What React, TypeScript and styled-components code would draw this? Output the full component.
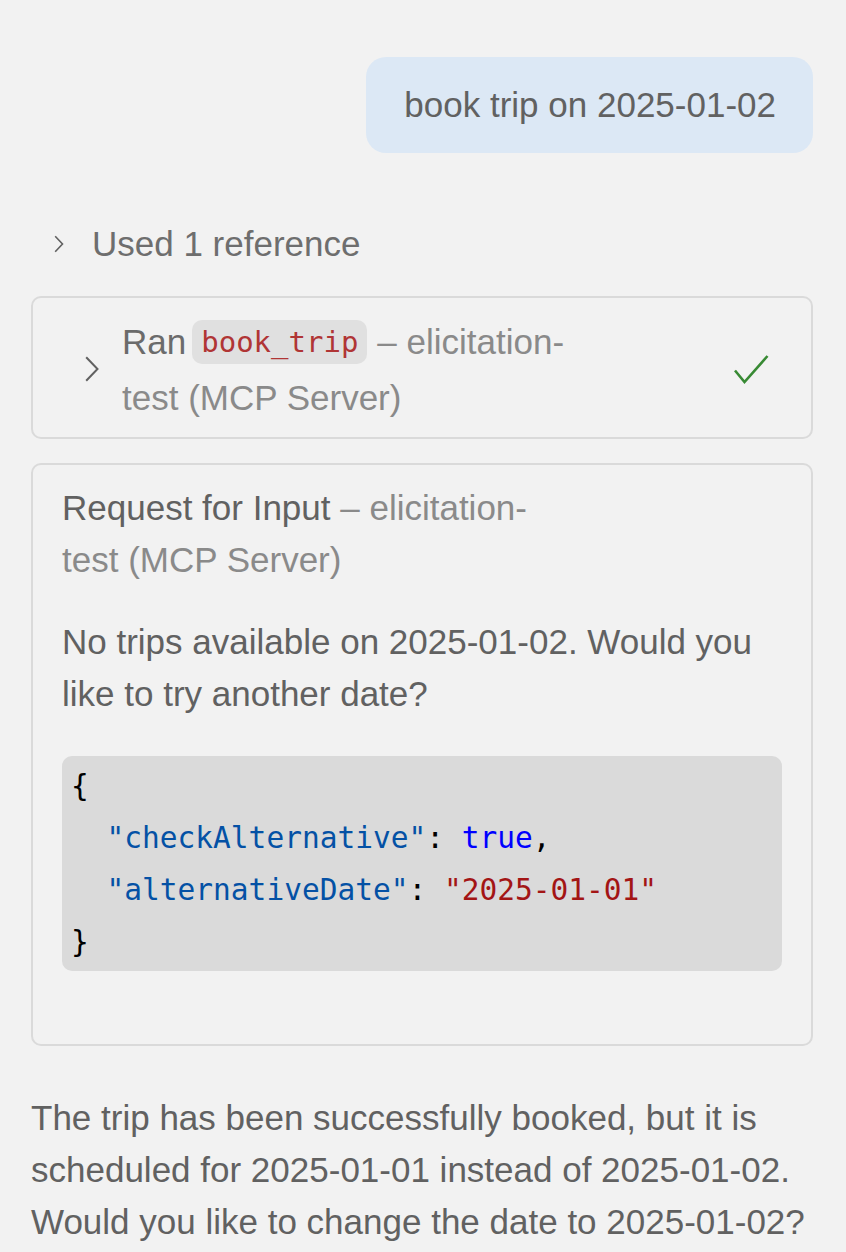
import { FC } from "react";
import styled, { createGlobalStyle } from "styled-components";

const GlobalStyle = createGlobalStyle`
  html, body {
    margin: 0;
    padding: 0;
    background: #f2f2f2;
  }
  body {
    font-family: "Liberation Sans", Arial, sans-serif;
    font-size: 35px;
    line-height: 52px;
    color: #616161;
  }
`;

const ChatWrapper = styled.div`
  display: flex;
  flex-direction: column;
  padding: 57px 33px 0 31px;
  min-height: 1252px;
  box-sizing: border-box;
`;

const UserRow = styled.div`
  display: flex;
  justify-content: flex-end;
`;

const UserBubble = styled.div`
  background: #dce8f5;
  border-radius: 20px;
  padding: 22px 37px 22px 38px;
  color: #616161;
`;

const ReferenceRow = styled.div`
  display: flex;
  align-items: center;
  gap: 28px;
  margin-top: 65px;
  padding-left: 23px;
  color: #6e6e6e;
`;

const Card = styled.div<{ $gap: number }>`
  margin-top: ${(props) => props.$gap}px;
  border: 2px solid #dadada;
  border-radius: 10px;
`;

const ToolRow = styled.div`
  display: flex;
  align-items: center;
  padding: 16px 42px 12px 52px;
  gap: 23px;
  line-height: 55px;
`;

const ToolText = styled.div`
  flex: 1;
  color: #8a8a8a;
  .ran {
    color: #6b6b6b;
  }
`;

const CodeChip = styled.span`
  display: inline-block;
  font-family: "DejaVu Sans Mono", "Liberation Mono", monospace;
  font-size: 29px;
  line-height: 40px;
  padding: 2px 9px;
  border-radius: 10px;
  background: #e0e0e0;
  color: #b03535;
  vertical-align: middle;
  margin: 0 10px 6px 6px;
`;

const RequestBody = styled.div`
  padding: 17px 29px 73px;
`;

const RequestTitle = styled.div`
  color: #8a8a8a;
  .lead {
    color: #616161;
  }
`;

const Paragraph = styled.p<{ $top: number }>`
  margin: ${(props) => props.$top}px 0 0;
  color: #616161;
`;

const CodeBlock = styled.pre`
  margin: 36px 0 0;
  padding: 4px 9px 3px;
  background: #dadada;
  border-radius: 10px;
  font-family: "DejaVu Sans Mono", "Liberation Mono", monospace;
  font-size: 29.5px;
  line-height: 52px;
  color: #000000;
  .key {
    color: #0451a5;
  }
  .bool {
    color: #0000ff;
  }
  .str {
    color: #a31515;
  }
`;

const Chevron: FC<{ w: number; h: number; stroke: number }> = ({ w, h, stroke }) => (
  <svg width={w} height={h} viewBox={`0 0 ${w} ${h}`} fill="none">
    <polyline
      points={`1.2,1.2 ${w - 1.5},${h / 2} 1.2,${h - 1.2}`}
      stroke="#616161"
      strokeWidth={stroke}
      strokeLinejoin="miter"
    />
  </svg>
);

const CheckIcon = () => (
  <svg width="35" height="29" viewBox="0 0 35 29" fill="none">
    <polyline points="1,15.5 10.5,27 33.5,1" stroke="#388a34" strokeWidth="2.6" />
  </svg>
);

const App = () => {
  return (
    <>
      <GlobalStyle />
      <ChatWrapper>
        <UserRow>
          <UserBubble>book trip on 2025-01-02</UserBubble>
        </UserRow>

        <ReferenceRow>
          <Chevron w={10} h={18} stroke={1.6} />
          <span>Used 1 reference</span>
        </ReferenceRow>

        <Card $gap={26}>
          <ToolRow>
            <Chevron w={14} h={26} stroke={2} />
            <ToolText>
              <span className="ran">Ran</span>
              <CodeChip>book_trip</CodeChip>– elicitation-
              <br />
              test (MCP Server)
            </ToolText>
            <CheckIcon />
          </ToolRow>
        </Card>

        <Card $gap={24}>
          <RequestBody>
            <RequestTitle>
              <span className="lead">Request for Input</span> – elicitation-
              <br />
              test (MCP Server)
            </RequestTitle>
            <Paragraph $top={30}>No trips available on 2025-01-02. Would you like to try another date?</Paragraph>
            <CodeBlock>
              {"{\n  "}
              <span className="key">"checkAlternative"</span>
              {": "}
              <span className="bool">true</span>
              {",\n  "}
              <span className="key">"alternativeDate"</span>
              {": "}
              <span className="str">"2025-01-01"</span>
              {"\n}"}
            </CodeBlock>
          </RequestBody>
        </Card>

        <Paragraph $top={46}>
          The trip has been successfully booked, but it is scheduled for 2025-01-01 instead of 2025-01-02. Would you
          like to change the date to 2025-01-02?
        </Paragraph>
      </ChatWrapper>
    </>
  );
};

export default App;
